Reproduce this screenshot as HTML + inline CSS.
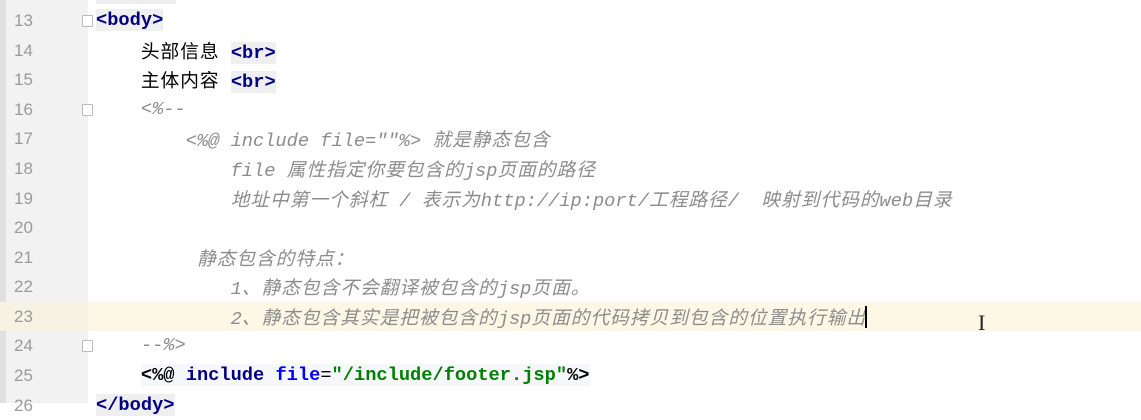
<!DOCTYPE html>
<html><head><meta charset="utf-8"><style>
body{margin:0;width:1141px;height:403px;overflow:hidden;background:#fff;position:relative;font-family:"Liberation Mono","Noto Sans CJK SC",monospace;font-size:18.7px}
.gut{position:absolute;left:0;top:0;width:88px;height:403px;background:#f2f2f2}
.strip{position:absolute;left:0;top:0;width:6px;height:403px;background:#e0e0e0}
.ln{position:absolute;left:14px;width:40px;color:#9a9a9a;font-size:17px;font-family:"Liberation Sans",sans-serif}
.row{position:absolute;left:96px;white-space:pre;height:29px;line-height:29px}
.c{font-family:"Noto Sans CJK SC",sans-serif;letter-spacing:1px}
.cm{color:#8c8c8c;font-style:italic}
.tg{color:#000080;font-weight:bold;background:#efefef}
.at{color:#0000ff;font-weight:bold}
.st{color:#008000;font-weight:bold}
.fold{position:absolute;left:82px;width:9px;height:10px;border:1px solid #bbb;background:#fff;border-radius:1px}
</style></head><body>
<div style="position:absolute;left:88px;top:302px;width:1053px;height:29px;background:#fdf8e6"></div>
<div class="gut"></div><div class="strip"></div>
<div style="position:absolute;left:0;top:302px;width:88px;height:29px;background:#f7f3e4"></div>
<div style="position:absolute;left:96px;top:0;width:80px;height:4px;background:#eee"></div>
<div class="ln" style="top:11px">13</div>
<div class="ln" style="top:41px">14</div>
<div class="ln" style="top:70px">15</div>
<div class="ln" style="top:100px">16</div>
<div class="ln" style="top:129px">17</div>
<div class="ln" style="top:159px">18</div>
<div class="ln" style="top:189px">19</div>
<div class="ln" style="top:218px">20</div>
<div class="ln" style="top:248px">21</div>
<div class="ln" style="top:277px">22</div>
<div class="ln" style="top:307px">23</div>
<div class="ln" style="top:336px">24</div>
<div class="ln" style="top:366px">25</div>
<div class="ln" style="top:396px">26</div>
<div class="fold" style="top:15px"></div>
<div class="fold" style="top:104px"></div>
<div class="fold" style="top:340px"></div>
<div class="row" style="top:6px"><span class="tg">&lt;body&gt;</span></div>
<div class="row" style="top:36px">    <span class="c">头部信息</span> <span class="tg">&lt;br&gt;</span></div>
<div class="row" style="top:65px">    <span class="c">主体内容</span> <span class="tg">&lt;br&gt;</span></div>
<div class="row cm" style="top:95px">    &lt;%--</div>
<div class="row cm" style="top:124px">        &lt;%@ include file=""%&gt; <span class="c">就是静态包含</span></div>
<div class="row cm" style="top:154px">            file <span class="c">属性指定你要包含的</span>jsp<span class="c">页面的路径</span></div>
<div class="row cm" style="top:184px">            <span class="c">地址中第一个斜杠</span> / <span class="c">表示为</span>http://ip:port/<span class="c">工程路径</span>/  <span class="c">映射到代码的</span>web<span class="c">目录</span></div>
<div class="row cm" style="top:243px">         <span class="c">静态包含的特点：</span></div>
<div class="row cm" style="top:272px">            1<span class="c">、静态包含不会翻译被包含的</span>jsp<span class="c">页面。</span></div>
<div class="row cm" style="top:302px">            2<span class="c">、静态包含其实是把被包含的</span>jsp<span class="c">页面的代码拷贝到包含的位置执行输出</span></div>
<div style="position:absolute;left:865px;top:306px;width:2px;height:22px;background:#000"></div>
<div style="position:absolute;left:978px;top:310px;font-family:'Liberation Serif',serif;font-size:22px;color:#222">I</div>
<div class="row cm" style="top:331px">    --%&gt;</div>
<div class="row" style="top:361px">    <span style="background:#f5f7fb"><span style="font-weight:bold">&lt;%@</span> <span class="tg" style="background:none">include</span> <span class="at">file</span>=<span class="st">"/include/footer.jsp"</span><span style="font-weight:bold">%&gt;</span></span></div>
<div class="row" style="top:391px"><span class="tg">&lt;/body&gt;</span></div>
</body></html>
